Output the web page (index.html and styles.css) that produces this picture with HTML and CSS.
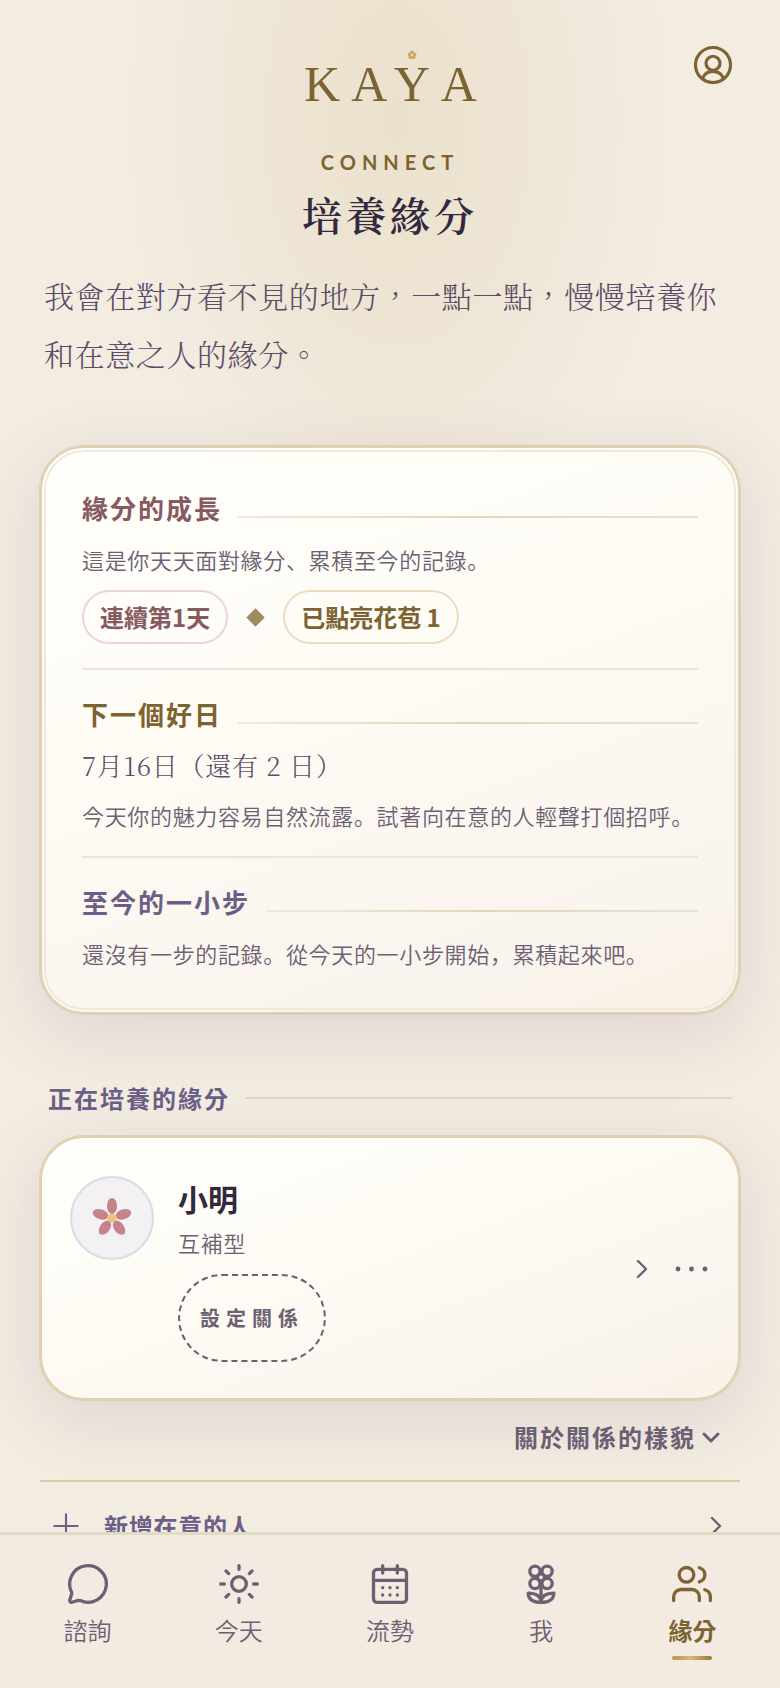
FILE: index.html
```html
<!DOCTYPE html>
<html lang="zh-Hant">
    <head>
        <meta charset="UTF-8">
        <meta name="viewport" content="width=device-width, initial-scale=1.0">
        <title>KAYA</title>
        <link rel="stylesheet" href="styles.css">
    </head>
    <body>
        <main class="page">
            <header class="header">
                <div class="logo">KA<span class="logo-y">Y<svg class="logo-flower" viewBox="0 0 10 10" aria-hidden="true"><g fill="#cfac67"><circle cx="5" cy="2.6" r="2"/><circle cx="7.4" cy="4.4" r="2"/><circle cx="6.5" cy="7.2" r="2"/><circle cx="3.5" cy="7.2" r="2"/><circle cx="2.6" cy="4.4" r="2"/><circle cx="5" cy="5" r="2.5"/></g><circle cx="5" cy="5" r="1" fill="#fbe6b4"/></svg></span>A</div>
                <button class="profile" type="button" aria-label="帳號">
                    <svg class="icon" viewBox="0 0 24 24" aria-hidden="true"><circle cx="12" cy="12" r="10"/><circle cx="12" cy="11" r="4"/><path d="M6 19.8a6.4 6.4 0 0 1 12 0"/></svg>
                </button>
            </header>

            <p class="eyebrow">CONNECT</p>
            <h1 class="title">培養緣分</h1>
            <p class="intro">我會在對方看不見的地方，一點一點，慢慢培養你和在意之人的緣分。</p>

            <!-- lang="ja": 句號、逗號靠左下 -->
            <div class="card summary" lang="ja">
                <section class="part">
                    <h2 class="part-title rose">緣分的成長</h2>
                    <p class="text">這是你天天面對緣分、累積至今的記錄。</p>
                    <div class="chips">
                        <span class="chip rose">連續第1天</span>
                        <span class="diamond"></span>
                        <span class="chip gold">已點亮花苞 1</span>
                    </div>
                </section>
                <section class="part">
                    <h2 class="part-title gold">下一個好日</h2>
                    <p class="date">7月16日（還有 2 日）</p>
                    <p class="text">今天你的魅力容易自然流露。試著向在意的人輕聲打個招呼。</p>
                </section>
                <section class="part">
                    <h2 class="part-title violet">至今的一小步</h2>
                    <p class="text">還沒有一步的記錄。從今天的一小步開始，累積起來吧。</p>
                </section>
            </div>

            <h2 class="list-title">正在培養的緣分</h2>
            <div class="card person">
                <svg class="avatar" viewBox="0 0 80 80" aria-hidden="true">
                    <g fill="#c5838b">
                        <ellipse cx="40" cy="28" rx="5" ry="8"/>
                        <ellipse cx="40" cy="28" rx="5" ry="8" transform="rotate(72 40 40)"/>
                        <ellipse cx="40" cy="28" rx="5" ry="8" transform="rotate(144 40 40)"/>
                        <ellipse cx="40" cy="28" rx="5" ry="8" transform="rotate(216 40 40)"/>
                        <ellipse cx="40" cy="28" rx="5" ry="8" transform="rotate(288 40 40)"/>
                    </g>
                    <circle cx="40" cy="40" r="4.5" fill="#e8c67c"/>
                </svg>
                <div class="person-info">
                    <h3 class="person-name">小明</h3>
                    <p class="person-type">互補型</p>
                    <button class="relation" type="button">設定關係</button>
                </div>
                <a class="person-open" href="#" aria-label="小明"><svg class="icon chevron" viewBox="0 0 24 24" aria-hidden="true"><path d="M8 4l8 8-8 8"/></svg></a>
                <button class="more" type="button" aria-label="更多">
                    <svg viewBox="0 0 36 36" aria-hidden="true"><g fill="currentColor"><circle cx="4" cy="18" r="2.4"/><circle cx="17.5" cy="18" r="2.4"/><circle cx="31" cy="18" r="2.4"/></g></svg>
                </button>
            </div>

            <button class="about" type="button">關於關係的樣貌<svg class="icon" viewBox="0 0 24 24" aria-hidden="true"><path d="M6 9l7 7 7-7"/></svg></button>

            <a class="add" href="#">
                <svg class="icon plus" viewBox="0 0 24 24" aria-hidden="true"><path d="M12 2v20M2 12h20"/></svg>
                <span class="add-text">新增在意的人</span>
                <svg class="icon chevron" viewBox="0 0 24 24" aria-hidden="true"><path d="M8 4l8 8-8 8"/></svg>
            </a>
        </main>

        <nav class="tabs">
            <a class="tab" href="#">
                <svg class="icon" viewBox="0 0 24 24" aria-hidden="true"><path d="M2.992 16.342a2 2 0 0 1 .094 1.167l-1.065 3.29a1 1 0 0 0 1.236 1.168l3.413-.998a2 2 0 0 1 1.099.092 10 10 0 1 0-4.777-4.719"/></svg>
                諮詢
            </a>
            <a class="tab" href="#">
                <svg class="icon" viewBox="0 0 24 24" aria-hidden="true"><circle cx="12" cy="12" r="4"/><path d="M12 2v2M12 20v2M4.93 4.93l1.41 1.41M17.66 17.66l1.41 1.41M2 12h2M20 12h2M6.34 17.66l-1.41 1.41M19.07 4.93l-1.41 1.41"/></svg>
                今天
            </a>
            <a class="tab" href="#">
                <svg class="icon" viewBox="0 0 24 24" aria-hidden="true"><path d="M8 2v4M16 2v4M3 10h18M8 14h.01M12 14h.01M16 14h.01M8 18h.01M12 18h.01M16 18h.01"/><rect x="3" y="4" width="18" height="18" rx="2"/></svg>
                流勢
            </a>
            <a class="tab" href="#">
                <svg class="icon" viewBox="0 0 24 24" aria-hidden="true"><circle cx="8.7" cy="5.1" r="2.8"/><circle cx="15.3" cy="5.1" r="2.8"/><circle cx="8.7" cy="11.7" r="2.8"/><circle cx="15.3" cy="11.7" r="2.8"/><circle class="flower-eye" cx="12" cy="8.4" r="1.9"/><path d="M12 10.4V22M12 22c4.2 0 7-1.667 7-5-4.2 0-7 1.667-7 5ZM12 22c-4.2 0-7-1.667-7-5 4.2 0 7 1.667 7 5Z"/></svg>
                我
            </a>
            <a class="tab active" href="#" aria-current="page">
                <svg class="icon" viewBox="0 0 24 24" aria-hidden="true"><path d="M16 21v-2a4 4 0 0 0-4-4H6a4 4 0 0 0-4 4v2M22 21v-2a4 4 0 0 0-3-3.87M16 3.13a4 4 0 0 1 0 7.75"/><circle cx="9" cy="7" r="4"/></svg>
                緣分
            </a>
        </nav>
    </body>
</html>
```
FILE: styles.css
```css
:root {
    --bg: #f3ece1;
    --sans: "Noto Sans CJK JP", sans-serif;
    --serif: "Noto Serif CJK TC", "Noto Sans CJK TC", serif;
    --ink: #33293d;
    --muted: #6c6172;
    --gold: #7c6331;
    --rose: #865a60;
    --violet: #6b5f88;
    --edge: #dfd0b0;
}

* {
    box-sizing: border-box;
    margin: 0;
    padding: 0;
}

body {
    height: 100vh;
    display: flex;
    flex-direction: column;
    overflow: hidden;
    background: radial-gradient(ellipse 270px 460px at 51% 120px, #eae1cd, #ede4d3 40%, var(--bg)) var(--bg) no-repeat;
    color: var(--muted);
    font-family: var(--sans);
    font-size: 22px;
}

button {
    border: 0;
    background: none;
    color: inherit;
    font: inherit;
}
a {
    color: inherit;
    text-decoration: none;
}
svg {
    display: block;
    flex: none;
}
.icon {
    fill: none;
    stroke: currentColor;
    stroke-width: 1.8;
    stroke-linecap: round;
    stroke-linejoin: round;
}
.chevron {
    width: 24px;
    height: 24px;
}

.rose {color: var(--rose);}
.gold {color: var(--gold);}
.violet {color: var(--violet);}

.page {
    flex: 1;
    min-height: 0;
    overflow-y: auto;
    scrollbar-width: none;
    padding: 44px 40px 0;
}

/* header */
.header {
    display: grid;
    grid-template-columns: 1fr auto 1fr;
    padding: 0 6px;
}
.logo {
    grid-column: 2;
    padding: 12px 0 0 12px;
    color: var(--gold);
    font-family: "Liberation Serif", serif;
    font-size: 50px;
    line-height: 56px;
    letter-spacing: 11px;
}
.logo-y {
    position: relative;
}
.logo-flower {
    position: absolute;
    top: -6px;
    left: 13px;
    width: 10px;
    height: 10px;
}
.profile {
    justify-self: end;
    align-self: start;
    color: var(--gold);
}
.profile .icon {
    width: 42px;
    height: 42px;
}

.eyebrow {
    margin-top: 36px;
    color: var(--gold);
    font-family: Lato, sans-serif;
    font-size: 20px;
    font-weight: 700;
    line-height: 28px;
    letter-spacing: 6px;
    text-align: center;
}
.title {
    margin-top: 8px;
    color: var(--ink);
    font-family: var(--serif);
    font-size: 40px;
    font-weight: 600;
    line-height: 60px;
    letter-spacing: 4px;
    text-align: center;
}
.intro {
    margin: 22px 0 64px;
    padding: 0 4px;
    color: #5b4d68;
    font-family: var(--serif);
    font-size: 30px;
    font-weight: 300;
    line-height: 58px;
    letter-spacing: 0.02em;
}

/* cards */
.card {
    position: relative;
    border: 2px solid var(--edge);
    border-radius: 44px;
    background: linear-gradient(160deg, #fffffb, #fefbf4 45%, #f9f4ed 85%, #faf1e6);
    box-shadow: 0 0 0 1px var(--edge), 0 18px 68px rgba(90, 70, 110, 0.14);
}
.summary {
    padding: 40px 40px 18px;
}
.summary::after {
    content: "";
    position: absolute;
    inset: 2px;
    border: 2px solid #f0e8da;
    border-radius: 40px;
    pointer-events: none;
}
.part {
    display: flex;
    flex-direction: column;
    gap: 12px;
    padding-bottom: 22px;
}
.part + .part {
    padding-top: 24px;
    border-top: 2px solid #e9e3e1;
}
.part-title {
    display: flex;
    align-items: center;
    gap: 16px;
    font-size: 26px;
    font-weight: 700;
    line-height: 40px;
    letter-spacing: 2px;
}
.part-title::after {
    content: "";
    flex: 1;
    height: 2px;
    margin-top: 18px;
    background: linear-gradient(90deg, #f0e9e2, #e4d7b8 50%, #e9dfdb);
}
.text {
    font-weight: 350;
    line-height: 38px;
    letter-spacing: 0.03em;
}
.date {
    color: #5b4d68;
    font-family: "Noto Serif CJK JP", "Noto Sans CJK JP", serif;
    font-size: 26px;
    font-weight: 300;
    line-height: 38px;
    letter-spacing: 0.03em;
}
.chips {
    display: flex;
    align-items: center;
    gap: 21px;
    margin-bottom: 2px;
}
.chip {
    padding: 0 16px;
    border: 2px solid #ebdcc0;
    border-radius: 27px;
    font-size: 24px;
    font-weight: 600;
    line-height: 50px;
}
.chip.rose {
    border-color: #ead4d6;
}
.diamond {
    width: 13px;
    height: 13px;
    background: #a08a62;
    transform: rotate(45deg);
}

/* people */
.list-title {
    display: flex;
    align-items: center;
    gap: 16px;
    margin: 64px 0 18px;
    padding: 0 8px;
    color: var(--violet);
    font-size: 24px;
    font-weight: 600;
    line-height: 40px;
    letter-spacing: 2px;
}
.list-title::after {
    content: "";
    flex: 1;
    height: 2px;
    background: #ddd3d0;
}
.person {
    display: flex;
    align-items: center;
    padding: 38px 28px 36px;
}
.avatar {
    align-self: flex-start;
    width: 84px;
    height: 84px;
    margin-right: 24px;
    border: 2px solid #dedae3;
    border-radius: 50%;
    background: #f3f1f3;
}
.person-info {
    flex: 1;
}
.person-name {
    color: var(--ink);
    font-size: 30px;
    font-weight: 700;
    line-height: 44px;
}
.person-type {
    font-weight: 350;
    line-height: 44px;
    letter-spacing: 0.03em;
}
.relation {
    margin-top: 10px;
    padding: 0 20px;
    border: 2px dashed #6b6170;
    border-radius: 44px;
    font-size: 20px;
    font-weight: 600;
    line-height: 84px;
    letter-spacing: 6px;
}
.more {
    margin-left: 20px;
}
.more svg {
    width: 36px;
    height: 36px;
}
.about {
    display: flex;
    align-items: center;
    gap: 2px;
    margin: 0 0 6px auto;
    padding: 16px 18px;
    font-weight: 600;
    font-size: 24px;
    line-height: 42px;
    letter-spacing: 2px;
}
.about .icon {
    width: 24px;
    height: 24px;
    stroke-width: 3;
}
.add {
    display: flex;
    align-items: center;
    padding: 0 12px;
    border-top: 2px solid #d9caa2;
    color: var(--violet);
}
.plus {
    width: 28px;
    height: 28px;
}
.add-text {
    flex: 1;
    margin-left: 24px;
    font-size: 24px;
    font-weight: 600;
    line-height: 88px;
    letter-spacing: 0.03em;
}
.chevron {
    color: #6b6170;
    stroke-width: 2.4;
}

/* bottom tabs */
.tabs {
    display: flex;
    padding: 27px 12px 28px;
    border-top: 3px solid #e2dac5;
    background: #f3ebe1;
}
.tab {
    flex: 1;
    display: flex;
    flex-direction: column;
    align-items: center;
    font-size: 24px;
    font-weight: 350;
    line-height: 36px;
}
.tab .icon {
    width: 44px;
    height: 44px;
    margin-bottom: 6px;
}
.flower-eye {
    fill: var(--bg);
}
.active {
    color: var(--gold);
    font-weight: 600;
}
.active::after {
    content: "";
    width: 40px;
    height: 4px;
    margin-top: 8px;
    border-radius: 2px;
    background: linear-gradient(90deg, #b3955a, #d9b878 45%, #95783f);
}
```
